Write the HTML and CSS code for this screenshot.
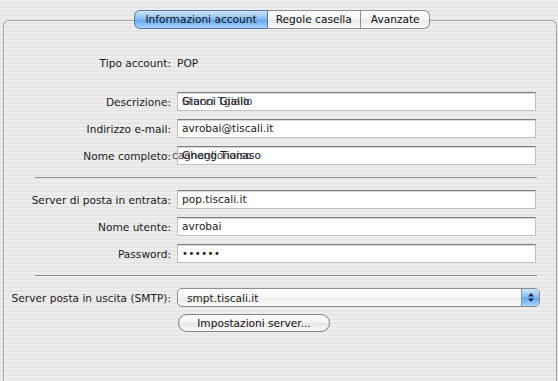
FILE: index.html
```html
<!DOCTYPE html>
<html>
<head>
    <title>Account</title>
    <link rel="stylesheet" href="styles.css">
</head>
<body>
    <div class="panel">
        <div class="tabs">
            <div class="tab selected">Informazioni account</div>
            <div class="tab">Regole casella</div>
            <div class="tab last">Avanzate</div>
        </div>

        <div class="form">
            <div class="row plain">
                <label>Tipo account:</label>
                <span class="value">POP</span>
            </div>

            <div class="row first">
                <label>Descrizione:</label>
                <div class="field"><span>Gianni Giallo</span><span class="ghost">Stucci Tgiallo</span></div>
            </div>
            <div class="row">
                <label>Indirizzo e-mail:</label>
                <div class="field">avrobai@tiscali.it</div>
            </div>
            <div class="row">
                <label>Nome completo:</label>
                <div class="field"><span>Gheng Tionaso</span><span class="ghost left">cagnaglionaiso</span></div>
            </div>

            <hr class="sep">

            <div class="row">
                <label>Server di posta in entrata:</label>
                <div class="field">pop.tiscali.it</div>
            </div>
            <div class="row">
                <label>Nome utente:</label>
                <div class="field">avrobai</div>
            </div>
            <div class="row">
                <label>Password:</label>
                <div class="field dots">&bull;&bull;&bull;&bull;&bull;&bull;</div>
            </div>

            <hr class="sep">

            <div class="row smtp">
                <label>Server posta in uscita (SMTP):</label>
                <div class="popup">
                    <span>smpt.tiscali.it</span>
                    <span class="stepper">
                        <svg width="8" height="11" viewBox="0 0 8 11"><path d="M4 1 L7 4.5 H1 Z M4 10 L7 6.5 H1 Z" fill="#1a2a4a"/></svg>
                    </span>
                </div>
            </div>
            <div class="row buttonrow">
                <label></label>
                <div><button class="pill">Impostazioni server...</button></div>
            </div>
        </div>
    </div>
</body>
</html>
```

FILE: styles.css
```css
body {
    margin: 0;
    height: 381px;
    overflow: hidden;
    font-family: "DejaVu Sans", sans-serif;
    font-size: 10.6px;
    color: #1a1a1a;
    background-color: #ececec;
    background-image: repeating-linear-gradient(to bottom, #ededed 0, #ededed 2px, #e6e6e6 2px, #e6e6e6 4px);
}

.panel {
    margin: 20px 1px 0 3px;
    height: 360px;
    border: 1px solid #a4a4a4;
    border-bottom: none;
    border-radius: 6px 6px 0 0;
    box-shadow: inset 1px 1px 0 #f6f6f6;
}

.tabs {
    display: flex;
    justify-content: center;
    margin: -11px 0 0 4px;
    height: 19px;
}
.tab {
    height: 17px;
    line-height: 17px;
    padding: 0 8px;
    border: 1px solid #8e8e8e;
    border-left: none;
    background: linear-gradient(#ffffff, #f4f4f4 50%, #e9e9e9 51%, #fafafa);
    color: #111;
}
.tab.selected {
    border: 1px solid #5478aa;
    border-radius: 6px 0 0 6px;
    padding: 0 10px;
    background: linear-gradient(#cfe3f8, #89bdf0 48%, #62a6ee 52%, #a8d6fb);
}
.tab.last {
    border-radius: 0 6px 6px 0;
    padding: 0 9px 0 10px;
}

.form {
    margin-top: 25px;
}

.row {
    display: flex;
    align-items: center;
    height: 19px;
    margin-bottom: 8px;
}
.row label {
    width: 167px;
    flex: none;
    text-align: right;
    padding-right: 6px;
}
.row.plain {
    height: 18px;
}
.row.first {
    margin-top: 20px;
}

.field {
    position: relative;
    width: 353px;
    height: 17px;
    line-height: 17px;
    padding-left: 4px;
    background: #fff;
    border: 1px solid #c0c0c0;
    border-top-color: #7c7c7c;
    box-shadow: inset 0 1px 0 #d8d8d8;
    white-space: nowrap;
}
.field .ghost {
    position: absolute;
    left: 4px;
    top: 0;
    color: #2a2a3a;
    opacity: 0.85;
}
.field .ghost.left {
    left: -6px;
}
.dots {
    letter-spacing: 0.5px;
    font-size: 10px;
}

.sep {
    margin: 12px 19px 12px 31px;
    border: none;
    border-top: 1px solid #8e8e8e;
    height: 0;
}

.smtp {
    margin-top: 11px;
    margin-bottom: 7px;
}
.popup {
    display: flex;
    align-items: center;
    justify-content: space-between;
    width: 361px;
    height: 17px;
    border: 1px solid #8c8c8c;
    border-radius: 5px;
    background: linear-gradient(#ffffff, #f4f4f4 50%, #ebebeb 51%, #fafafa);
    overflow: hidden;
}
.popup span:first-child {
    padding-left: 9px;
}
.stepper {
    display: flex;
    align-items: center;
    justify-content: center;
    width: 17px;
    height: 17px;
    border-left: 1px solid #7b97c3;
    background: linear-gradient(#cfe3f8, #89bdf0 48%, #62a6ee 52%, #a8d6fb);
}

.buttonrow {
    height: 18px;
}
.pill {
    width: 152px;
    height: 18px;
    margin-left: 1px;
    padding: 0;
    font-family: "DejaVu Sans", sans-serif;
    font-size: 10.6px;
    color: #111;
    border: 1px solid #808080;
    border-radius: 9px;
    background: linear-gradient(#ffffff, #f2f2f2 50%, #e6e6e6 51%, #fbfbfb);
}
```
